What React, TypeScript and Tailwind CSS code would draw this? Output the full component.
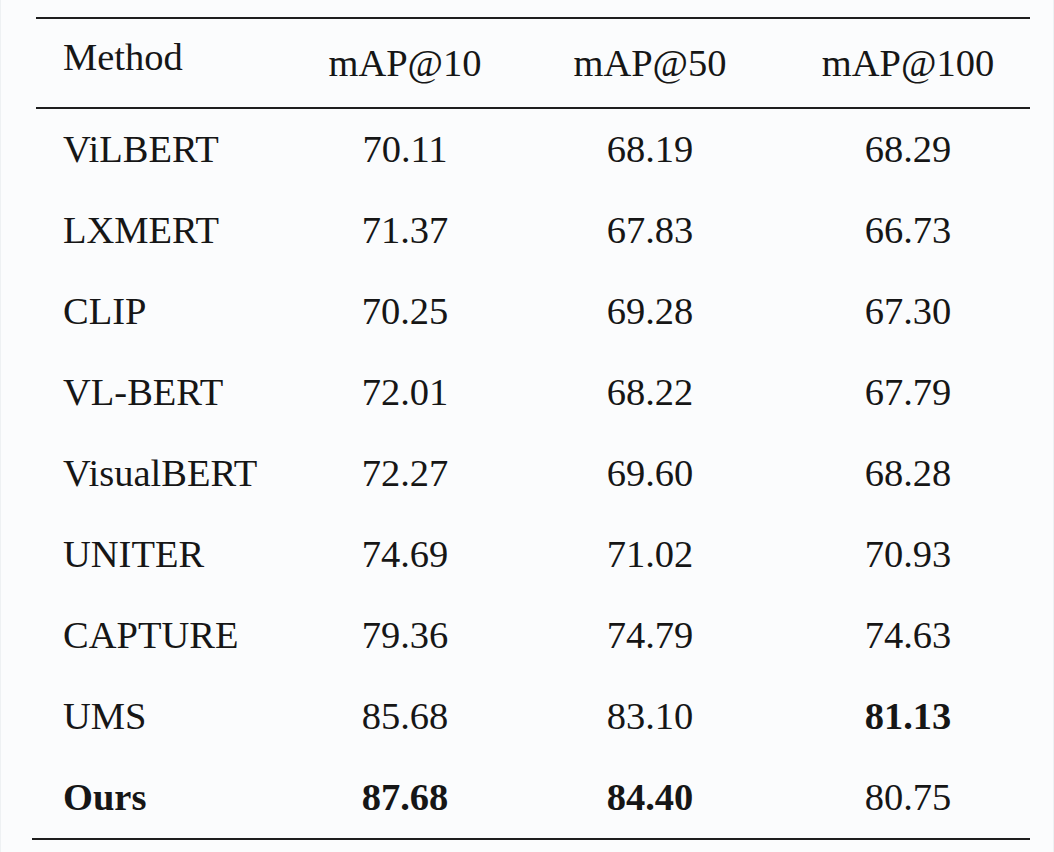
type Row = {
  method: string;
  values: [string, string, string];
  bold?: [boolean, boolean, boolean, boolean];
};

const rows: Row[] = [
  { method: 'ViLBERT', values: ['70.11', '68.19', '68.29'] },
  { method: 'LXMERT', values: ['71.37', '67.83', '66.73'] },
  { method: 'CLIP', values: ['70.25', '69.28', '67.30'] },
  { method: 'VL-BERT', values: ['72.01', '68.22', '67.79'] },
  { method: 'VisualBERT', values: ['72.27', '69.60', '68.28'] },
  { method: 'UNITER', values: ['74.69', '71.02', '70.93'] },
  { method: 'CAPTURE', values: ['79.36', '74.79', '74.63'] },
  { method: 'UMS', values: ['85.68', '83.10', '81.13'], bold: [false, false, false, true] },
  { method: 'Ours', values: ['87.68', '84.40', '80.75'], bold: [true, true, true, false] },
];

const grid = 'grid grid-cols-[260px_218px_272px_244px]';

export default function App() {
  return (
    <div
      className="h-[852px] w-[1054px] border-x border-[#eef1f3] bg-[#fbfcfd] pl-[35px] pt-[17px] text-[38.5px] leading-none text-[#161616]"
      style={{ fontFamily: '"Liberation Serif", "Times New Roman", serif' }}
    >
      <div className="w-[994px]">
        <div className={`${grid} h-[92px] items-center border-y-2 border-[#1e1e1e]`}>
          <div className="pb-3 pl-[27px]">Method</div>
          <div className="text-center">mAP@10</div>
          <div className="text-center">mAP@50</div>
          <div className="text-center">mAP@100</div>
        </div>

        <div className="-ml-[4px] border-b-2 border-[#1e1e1e] pl-[4px]">
          {rows.map((row) => (
            <div key={row.method} className={`${grid} h-[81px] items-center`}>
              <div className={`pl-[27px] ${row.bold?.[0] ? 'font-bold' : ''}`}>{row.method}</div>
              {row.values.map((v, i) => (
                <div key={i} className={`text-center ${row.bold?.[i + 1] ? 'font-bold' : ''}`}>
                  {v}
                </div>
              ))}
            </div>
          ))}
        </div>
      </div>
    </div>
  );
}
